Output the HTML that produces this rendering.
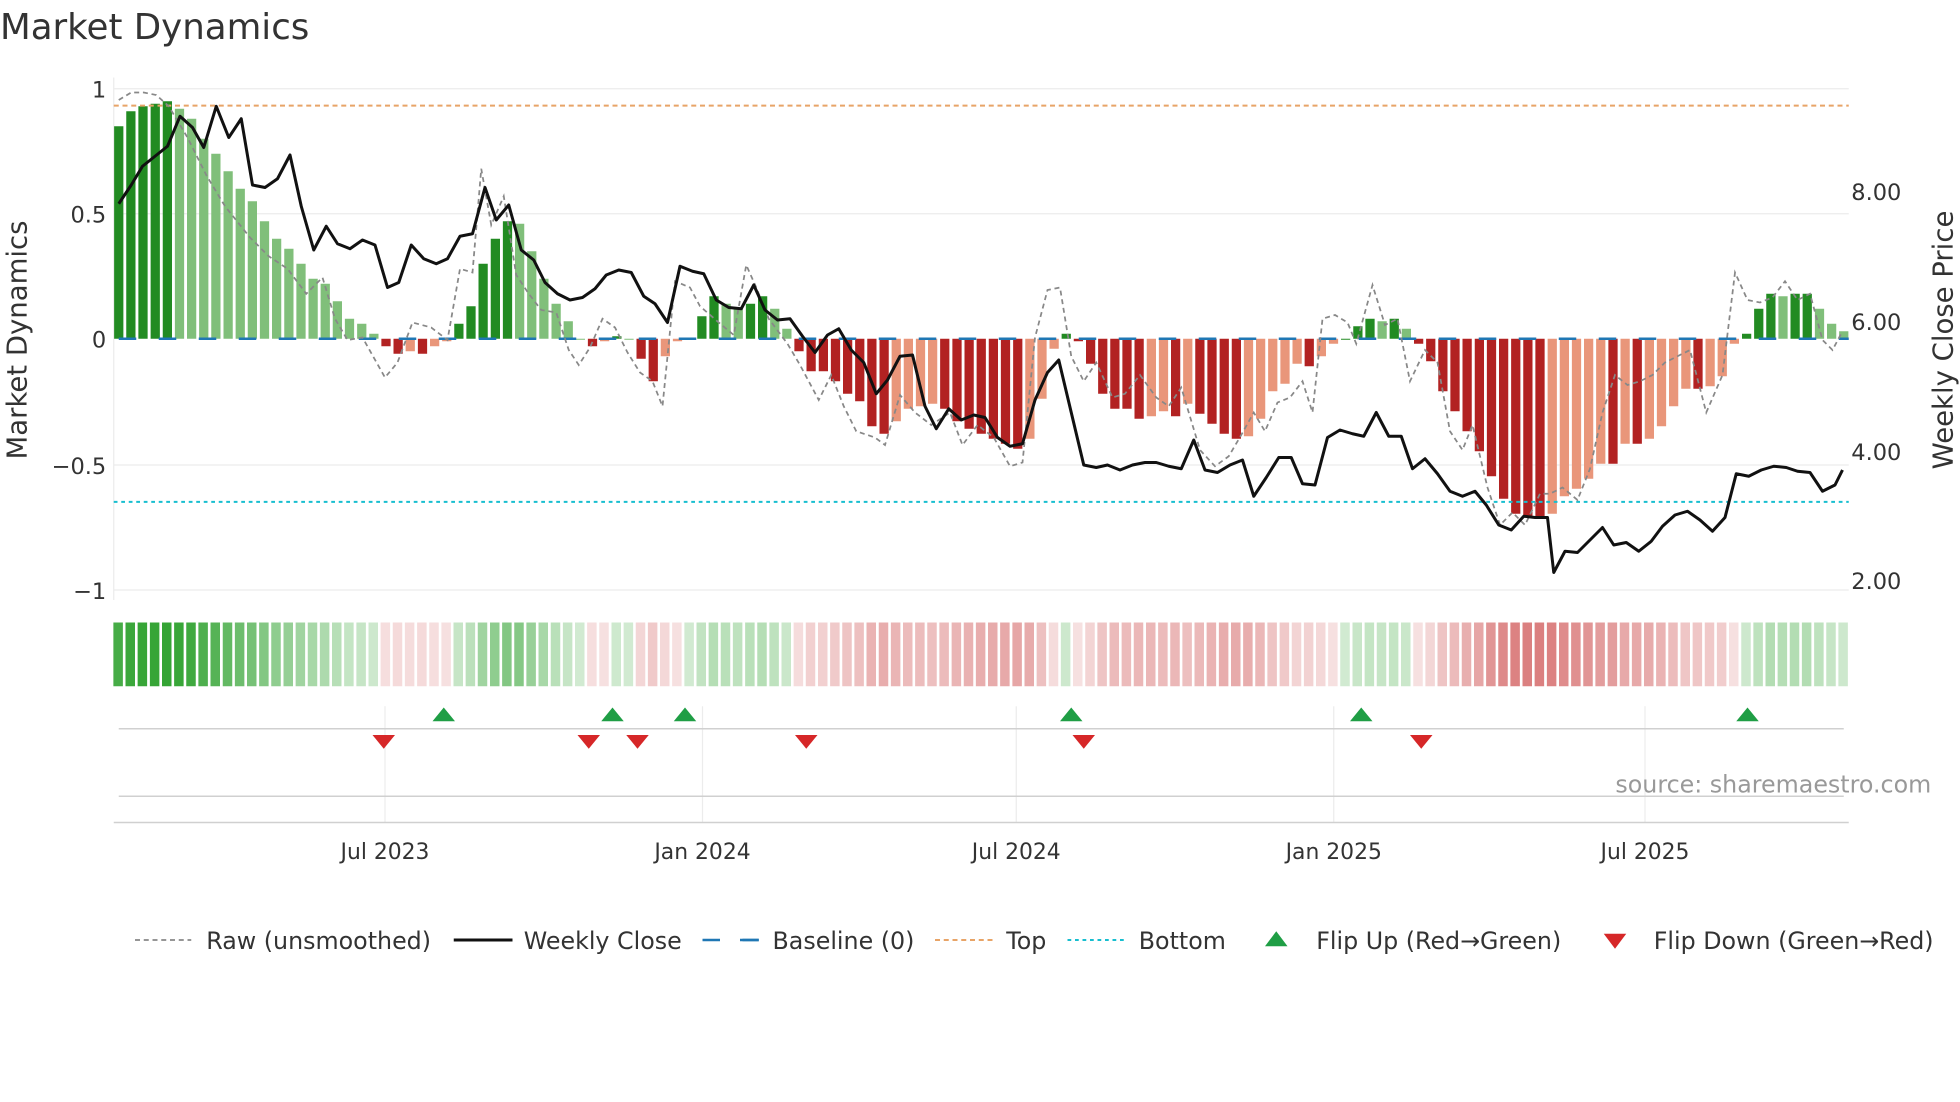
<!DOCTYPE html>
<html><head><meta charset="utf-8"><style>
html,body{margin:0;padding:0;background:#fff;}
svg{display:block;font-family:"DejaVu Sans","Liberation Sans",sans-serif;}
</style></head><body>
<svg id="s" width="1960" height="1102" viewBox="0 0 1568 881.6" xmlns="http://www.w3.org/2000/svg">
<rect width="1568" height="882" fill="#fff"/>
<text x="0" y="31" font-size="28.5" fill="#333">Market Dynamics</text>
<g stroke="#ececec" stroke-width="1">
<line x1="91" x2="1479" y1="71" y2="71"/><line x1="91" x2="1479" y1="171" y2="171"/>
<line x1="91" x2="1479" y1="372" y2="372"/><line x1="91" x2="1479" y1="472" y2="472"/>
<line x1="91" x2="91" y1="62" y2="480"/>
<line x1="308" x2="308" y1="565" y2="658"/><line x1="562" x2="562" y1="565" y2="658"/>
<line x1="813" x2="813" y1="565" y2="658"/><line x1="1067" x2="1067" y1="565" y2="658"/>
<line x1="1316" x2="1316" y1="565" y2="658"/>
</g>
<g stroke="#d0d0d0" stroke-width="1.2">
<line x1="95" x2="1475" y1="583" y2="583"/><line x1="95" x2="1475" y1="637" y2="637"/>
<line x1="91" x2="1479" y1="658" y2="658"/>
</g>
<g id="bars"></g>
<g id="strip"></g>
<line x1="91" x2="1479" y1="271" y2="271" stroke="#1f77b4" stroke-width="2" stroke-dasharray="14,18" stroke-dashoffset="-4"/>
<line x1="91" x2="1479" y1="84.5" y2="84.5" stroke="#e8a467" stroke-width="1.6" stroke-dasharray="4,3"/>
<line x1="91" x2="1479" y1="401.5" y2="401.5" stroke="#17becf" stroke-width="1.6" stroke-dasharray="3,3"/>
<polyline id="raw" fill="none" stroke="#888" stroke-width="1.4" stroke-dasharray="4,3"/>
<polyline id="price" fill="none" stroke="#111" stroke-width="2.4" stroke-linejoin="round"/>
<g font-size="18" fill="#333" text-anchor="end">
<text x="85" y="78">1</text><text x="85" y="178">0.5</text><text x="85" y="278">0</text>
<text x="85" y="379">−0.5</text><text x="85" y="479">−1</text>
</g>
<g font-size="18" fill="#333">
<text x="1481" y="160">8.00</text><text x="1481" y="264">6.00</text>
<text x="1481" y="368">4.00</text><text x="1481" y="471">2.00</text>
</g>
<text transform="translate(21,272) rotate(-90)" font-size="22" fill="#333" text-anchor="middle">Market Dynamics</text>
<text transform="translate(1562,272) rotate(-90)" font-size="22" fill="#333" text-anchor="middle">Weekly Close Price</text>
<g font-size="17.5" fill="#333" text-anchor="middle">
<text x="308" y="687">Jul 2023</text><text x="562" y="687">Jan 2024</text><text x="813" y="687">Jul 2024</text>
<text x="1067" y="687">Jan 2025</text><text x="1316" y="687">Jul 2025</text>
</g>
<text x="1545" y="634" font-size="19" fill="#999" text-anchor="end">source: sharemaestro.com</text>
<g id="flips"></g>
<g font-size="19" fill="#333">
<line x1="108" x2="153" y1="752" y2="752" stroke="#888" stroke-width="1.4" stroke-dasharray="4,3"/>
<text x="165" y="759">Raw (unsmoothed)</text>
<line x1="363" x2="410" y1="752" y2="752" stroke="#111" stroke-width="2.4"/>
<text x="419" y="759">Weekly Close</text>
<line x1="562" x2="607" y1="752" y2="752" stroke="#1f77b4" stroke-width="2" stroke-dasharray="14,18"/>
<line x1="592" x2="607" y1="752" y2="752" stroke="#1f77b4" stroke-width="2"/>
<text x="618" y="759">Baseline (0)</text>
<line x1="748" x2="794" y1="752" y2="752" stroke="#e8a467" stroke-width="1.6" stroke-dasharray="4,3"/>
<text x="805" y="759">Top</text>
<line x1="854" x2="900" y1="752" y2="752" stroke="#17becf" stroke-width="1.6" stroke-dasharray="3,3"/>
<text x="911" y="759">Bottom</text>
<polygon points="1012,757 1030,757 1021,745" fill="#1f9e45"/>
<text x="1053" y="759">Flip Up (Red→Green)</text>
<polygon points="1283,747 1301,747 1292,759" fill="#d62728"/>
<text x="1323" y="759">Flip Down (Green→Red)</text>
</g>
</svg>
<script>
var v=[0.85,0.91,0.93,0.94,0.95,0.92,0.88,0.80,0.74,0.67,0.60,0.55,0.47,0.40,0.36,0.30,0.24,0.22,0.15,0.08,0.06,0.02,
-0.03,-0.06,-0.05,-0.06,-0.03,-0.01,
0.06,0.13,0.30,0.40,0.47,0.46,0.35,0.24,0.14,0.07,
0.0,-0.03,-0.01,0.01,0.0,-0.08,-0.17,-0.07,-0.01,0.0,
0.09,0.17,0.14,0.12,0.14,0.17,0.12,0.04,-0.05,-0.13,
-0.13,-0.17,-0.22,-0.25,-0.35,-0.38,-0.33,-0.28,-0.27,-0.26,-0.28,-0.33,-0.36,-0.38,-0.40,-0.42,-0.44,-0.40,-0.24,
-0.04,0.02,-0.01,-0.10,-0.22,-0.28,-0.28,-0.32,-0.31,-0.29,-0.31,-0.26,-0.30,-0.34,-0.38,-0.40,-0.39,-0.32,-0.21,-0.18,-0.10,-0.11,-0.07,-0.02,0.0,0.05,0.08,0.07,0.08,0.04,-0.02,-0.09,-0.21,-0.29,-0.37,-0.45,
-0.55,-0.64,-0.70,-0.71,-0.72,-0.70,-0.63,-0.60,-0.56,-0.50,-0.50,-0.42,-0.42,-0.40,-0.35,-0.27,-0.20,-0.20,-0.19,-0.15,-0.02,0.02,0.12,0.18,0.17,0.18,0.18,0.12,0.06,0.03];
var b="",st="",n=v.length,dx=1380/(n-1);
for(var i=0;i<n;i++){var x=95+i*dx,val=v[i],p=i?v[i-1]:val-0.01,c;
if(val>=0)c=(val>=p)?"#228b22":"#80bf7a";else c=(val<=p)?"#b22222":"#e9967a";
var y0=271,y1=271-val*200;b+='<rect x="'+(x-3.7).toFixed(1)+'" y="'+Math.min(y0,y1).toFixed(1)+'" width="7.4" height="'+Math.max(0.8,Math.abs(y1-y0)).toFixed(1)+'" fill="'+c+'"/>';
var a,sc;if(val>=0){a=0.22+0.78*Math.min(1,val);sc="44,160,44";}else{a=0.15+0.7*Math.min(1,-val);sc="200,60,60";}
st+='<rect x="'+(x-4.3).toFixed(1)+'" y="498" width="7.6" height="51" fill="rgba('+sc+','+a.toFixed(2)+')"/>';}
document.getElementById("bars").innerHTML=b;document.getElementById("strip").innerHTML=st;
var pr=[95,163,105,148,114,133,124,125,134,117,144,93,154,102,163,118,173,85,183,110,193,95,202,148,212,150,222,143,232,124,241,165,251,200,261,181,270,195,280,199,290,192,300,196,310,230,319,226,329,196,339,207,349,211,358,207,368,189,378,187,388,150,397,176,407,164,417,200,427,208,436,226,446,235,456,240,466,238,476,231,485,220,495,216,505,218,515,237,524,243,534,258,544,213,554,217,563,219,573,240,583,246,593,247,603,228,612,248,622,256,632,255,642,269,652,282,662,268,671,263,681,280,691,290,701,315,710,304,720,285,730,284,740,325,749,343,759,327,769,336,779,332,788,334,798,350,808,357,818,355,828,320,838,298,847,288,857,330,867,372,877,374,886,372,896,376,906,372,916,370,925,370,935,373,945,375,955,352,964,376,974,378,984,372,994,368,1003,397,1013,382,1023,366,1033,366,1042,387,1052,388,1062,350,1072,344,1082,347,1091,349,1101,330,1111,349,1121,349,1130,375,1140,367,1150,379,1160,393,1170,397,1180,393,1189,404,1199,420,1209,424,1219,413,1228,414,1238,414,1243,458,1252,441,1262,442,1272,432,1282,422,1291,436,1301,434,1311,441,1321,433,1330,421,1340,412,1350,409,1360,416,1370,425,1380,414,1389,379,1399,381,1409,376,1419,373,1429,374,1438,377,1448,378,1458,393,1468,388,1474,376];
var raw=[95,80,105,74,115,74,125,76,135,85,150,110,165,140,180,165,200,190,215,205,230,215,245,235,258,222,268,255,278,272,290,270,308,302,318,290,330,258,345,262,358,272,368,215,378,218,385,135,393,180,403,157,413,220,423,235,433,248,445,250,455,280,463,292,472,278,482,255,492,262,502,282,512,298,522,305,530,325,540,225,552,230,560,245,575,258,587,268,597,212,605,230,615,255,630,275,640,292,655,320,665,300,675,325,685,345,700,350,708,356,720,316,732,330,745,340,760,330,770,356,782,340,795,350,808,373,818,370,828,270,838,232,848,230,857,285,867,305,877,290,890,318,900,315,912,300,925,318,935,325,945,310,960,360,972,373,983,365,993,348,1003,330,1012,345,1022,322,1032,318,1042,305,1050,330,1058,255,1068,252,1078,258,1085,275,1098,228,1108,260,1118,255,1128,305,1140,280,1150,290,1160,345,1170,360,1178,340,1190,390,1200,420,1210,410,1220,420,1232,395,1240,395,1250,390,1262,400,1272,375,1282,330,1292,300,1302,308,1312,305,1322,300,1332,290,1342,285,1352,280,1365,330,1378,300,1388,218,1398,240,1408,242,1418,238,1428,225,1438,240,1448,235,1458,272,1466,280,1474,265];
function pts(a){var s="";for(var i=0;i<a.length;i+=2)s+=a[i]+","+a[i+1]+" ";return s;}
document.getElementById("price").setAttribute("points",pts(pr));
document.getElementById("raw").setAttribute("points",pts(raw));
var f="",up=[355,490,548,857,1089,1398],dn=[307,471,510,645,867,1137];
up.forEach(function(x){f+='<polygon points="'+(x-9)+',577 '+(x+9)+',577 '+x+',566" fill="#1f9e45"/>';});
dn.forEach(function(x){f+='<polygon points="'+(x-9)+',588 '+(x+9)+',588 '+x+',599" fill="#d62728"/>';});
document.getElementById("flips").innerHTML=f;
</script>
</body></html>
